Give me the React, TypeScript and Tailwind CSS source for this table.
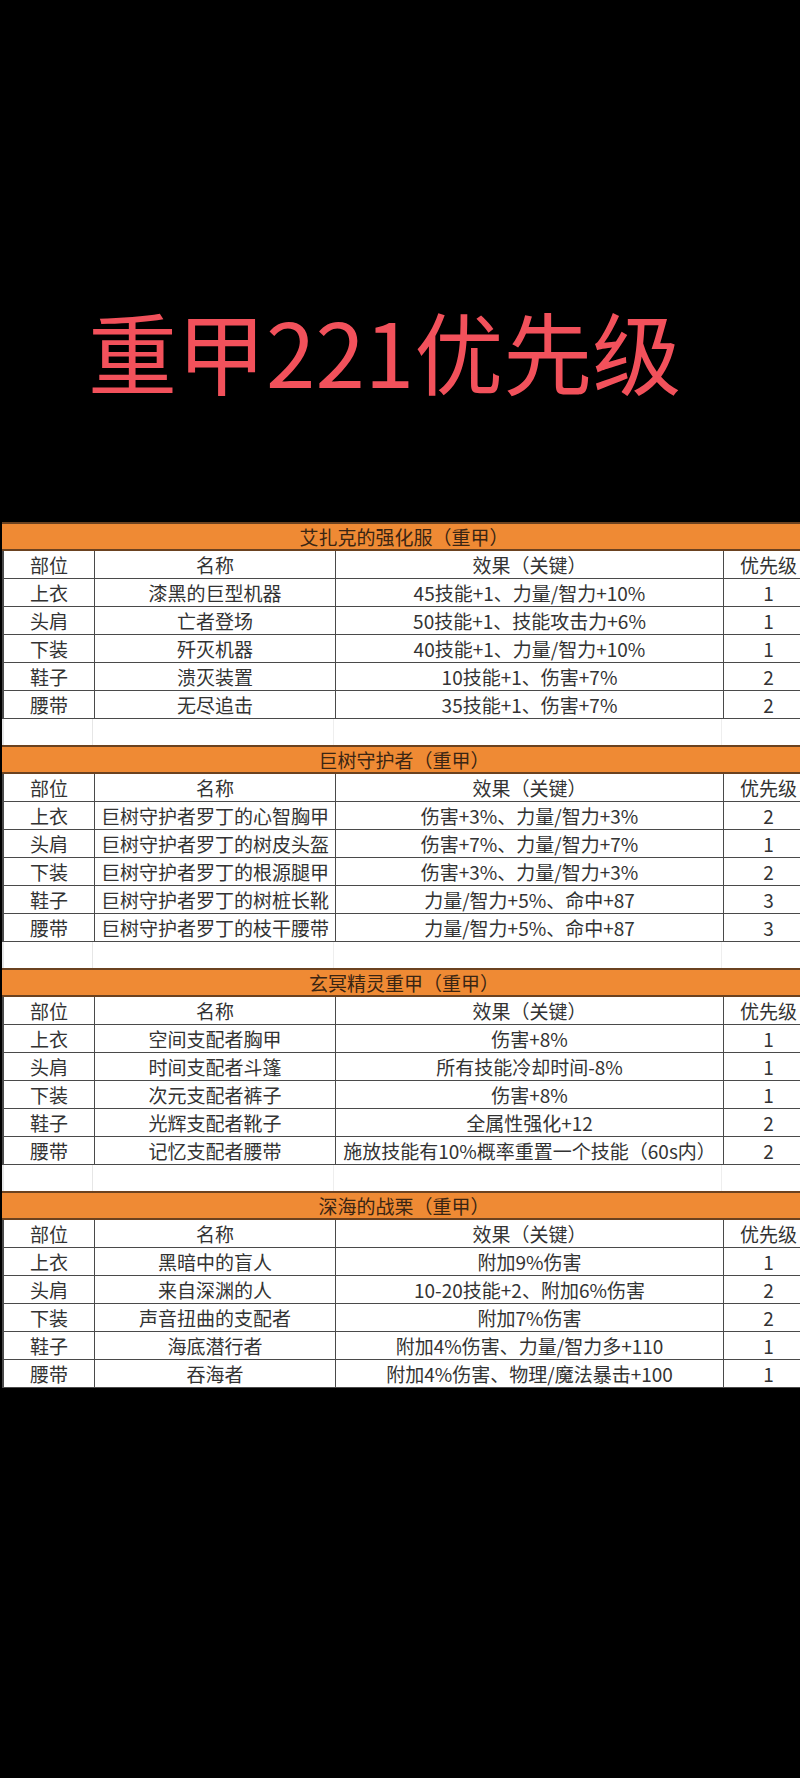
type Row = [string, string, string, string];

type Section = {
  title: string;
  rows: Row[];
};

const sections: Section[] = [
  {
    title: '艾扎克的强化服（重甲）',
    rows: [
      ['上衣', '漆黑的巨型机器', '45技能+1、力量/智力+10%', '1'],
      ['头肩', '亡者登场', '50技能+1、技能攻击力+6%', '1'],
      ['下装', '歼灭机器', '40技能+1、力量/智力+10%', '1'],
      ['鞋子', '溃灭装置', '10技能+1、伤害+7%', '2'],
      ['腰带', '无尽追击', '35技能+1、伤害+7%', '2'],
    ],
  },
  {
    title: '巨树守护者（重甲）',
    rows: [
      ['上衣', '巨树守护者罗丁的心智胸甲', '伤害+3%、力量/智力+3%', '2'],
      ['头肩', '巨树守护者罗丁的树皮头盔', '伤害+7%、力量/智力+7%', '1'],
      ['下装', '巨树守护者罗丁的根源腿甲', '伤害+3%、力量/智力+3%', '2'],
      ['鞋子', '巨树守护者罗丁的树桩长靴', '力量/智力+5%、命中+87', '3'],
      ['腰带', '巨树守护者罗丁的枝干腰带', '力量/智力+5%、命中+87', '3'],
    ],
  },
  {
    title: '玄冥精灵重甲（重甲）',
    rows: [
      ['上衣', '空间支配者胸甲', '伤害+8%', '1'],
      ['头肩', '时间支配者斗篷', '所有技能冷却时间-8%', '1'],
      ['下装', '次元支配者裤子', '伤害+8%', '1'],
      ['鞋子', '光辉支配者靴子', '全属性强化+12', '2'],
      ['腰带', '记忆支配者腰带', '施放技能有10%概率重置一个技能（60s内）', '2'],
    ],
  },
  {
    title: '深海的战栗（重甲）',
    rows: [
      ['上衣', '黑暗中的盲人', '附加9%伤害', '1'],
      ['头肩', '来自深渊的人', '10-20技能+2、附加6%伤害', '2'],
      ['下装', '声音扭曲的支配者', '附加7%伤害', '2'],
      ['鞋子', '海底潜行者', '附加4%伤害、力量/智力多+110', '1'],
      ['腰带', '吞海者', '附加4%伤害、物理/魔法暴击+100', '1'],
    ],
  },
];

function TableRow({ cells }: { cells: Row }) {
  return (
    <div className="grid h-[28px] grid-cols-[91px_241px_388px_90px] border-b border-[#4a4a4a] bg-white text-[19px] leading-none text-[#333]">
      {cells.map((c, i) => (
        <div
          key={i}
          className="flex items-center justify-center whitespace-nowrap border-r border-[#4a4a4a]"
        >
          {c}
        </div>
      ))}
    </div>
  );
}

function SectionBlock({ section, last }: { section: Section; last: boolean }) {
  return (
    <div>
      <div className="flex h-[29px] items-center justify-center border-y-2 border-[#6b4220] bg-[#ef8a34] pr-[8px] text-[19px] leading-none text-[#3a2513]">
        {section.title}
      </div>
      <div className="border-l-2 border-[#4a4a4a]">
        <TableRow cells={['部位', '名称', '效果（关键）', '优先级']} />
        {section.rows.map((r, i) => (
          <TableRow key={i} cells={r} />
        ))}
      </div>
      {!last && (
        <div className="grid h-[26px] grid-cols-[91px_241px_388px_90px] bg-white">
          <div className="border-l-2 border-r border-[#e6e6e6]" />
          <div className="border-r border-[#eeeeee]" />
          <div className="border-r border-[#eeeeee]" />
          <div />
        </div>
      )}
    </div>
  );
}

export default function App() {
  return (
    <main
      className="h-[1778px] w-[800px] overflow-hidden bg-black"
      style={{ fontFamily: '"Noto Sans CJK SC", "Noto Sans", sans-serif' }}
    >
      <div className="h-[522px] pl-[88px] pt-[305px]">
        <h1 className="text-[89px] font-normal leading-none text-[#f2515b]">重甲221优先级</h1>
      </div>
      <div className="ml-[2px] w-[812px] bg-white">
        {sections.map((s, i) => (
          <SectionBlock key={i} section={s} last={i === sections.length - 1} />
        ))}
      </div>
    </main>
  );
}
